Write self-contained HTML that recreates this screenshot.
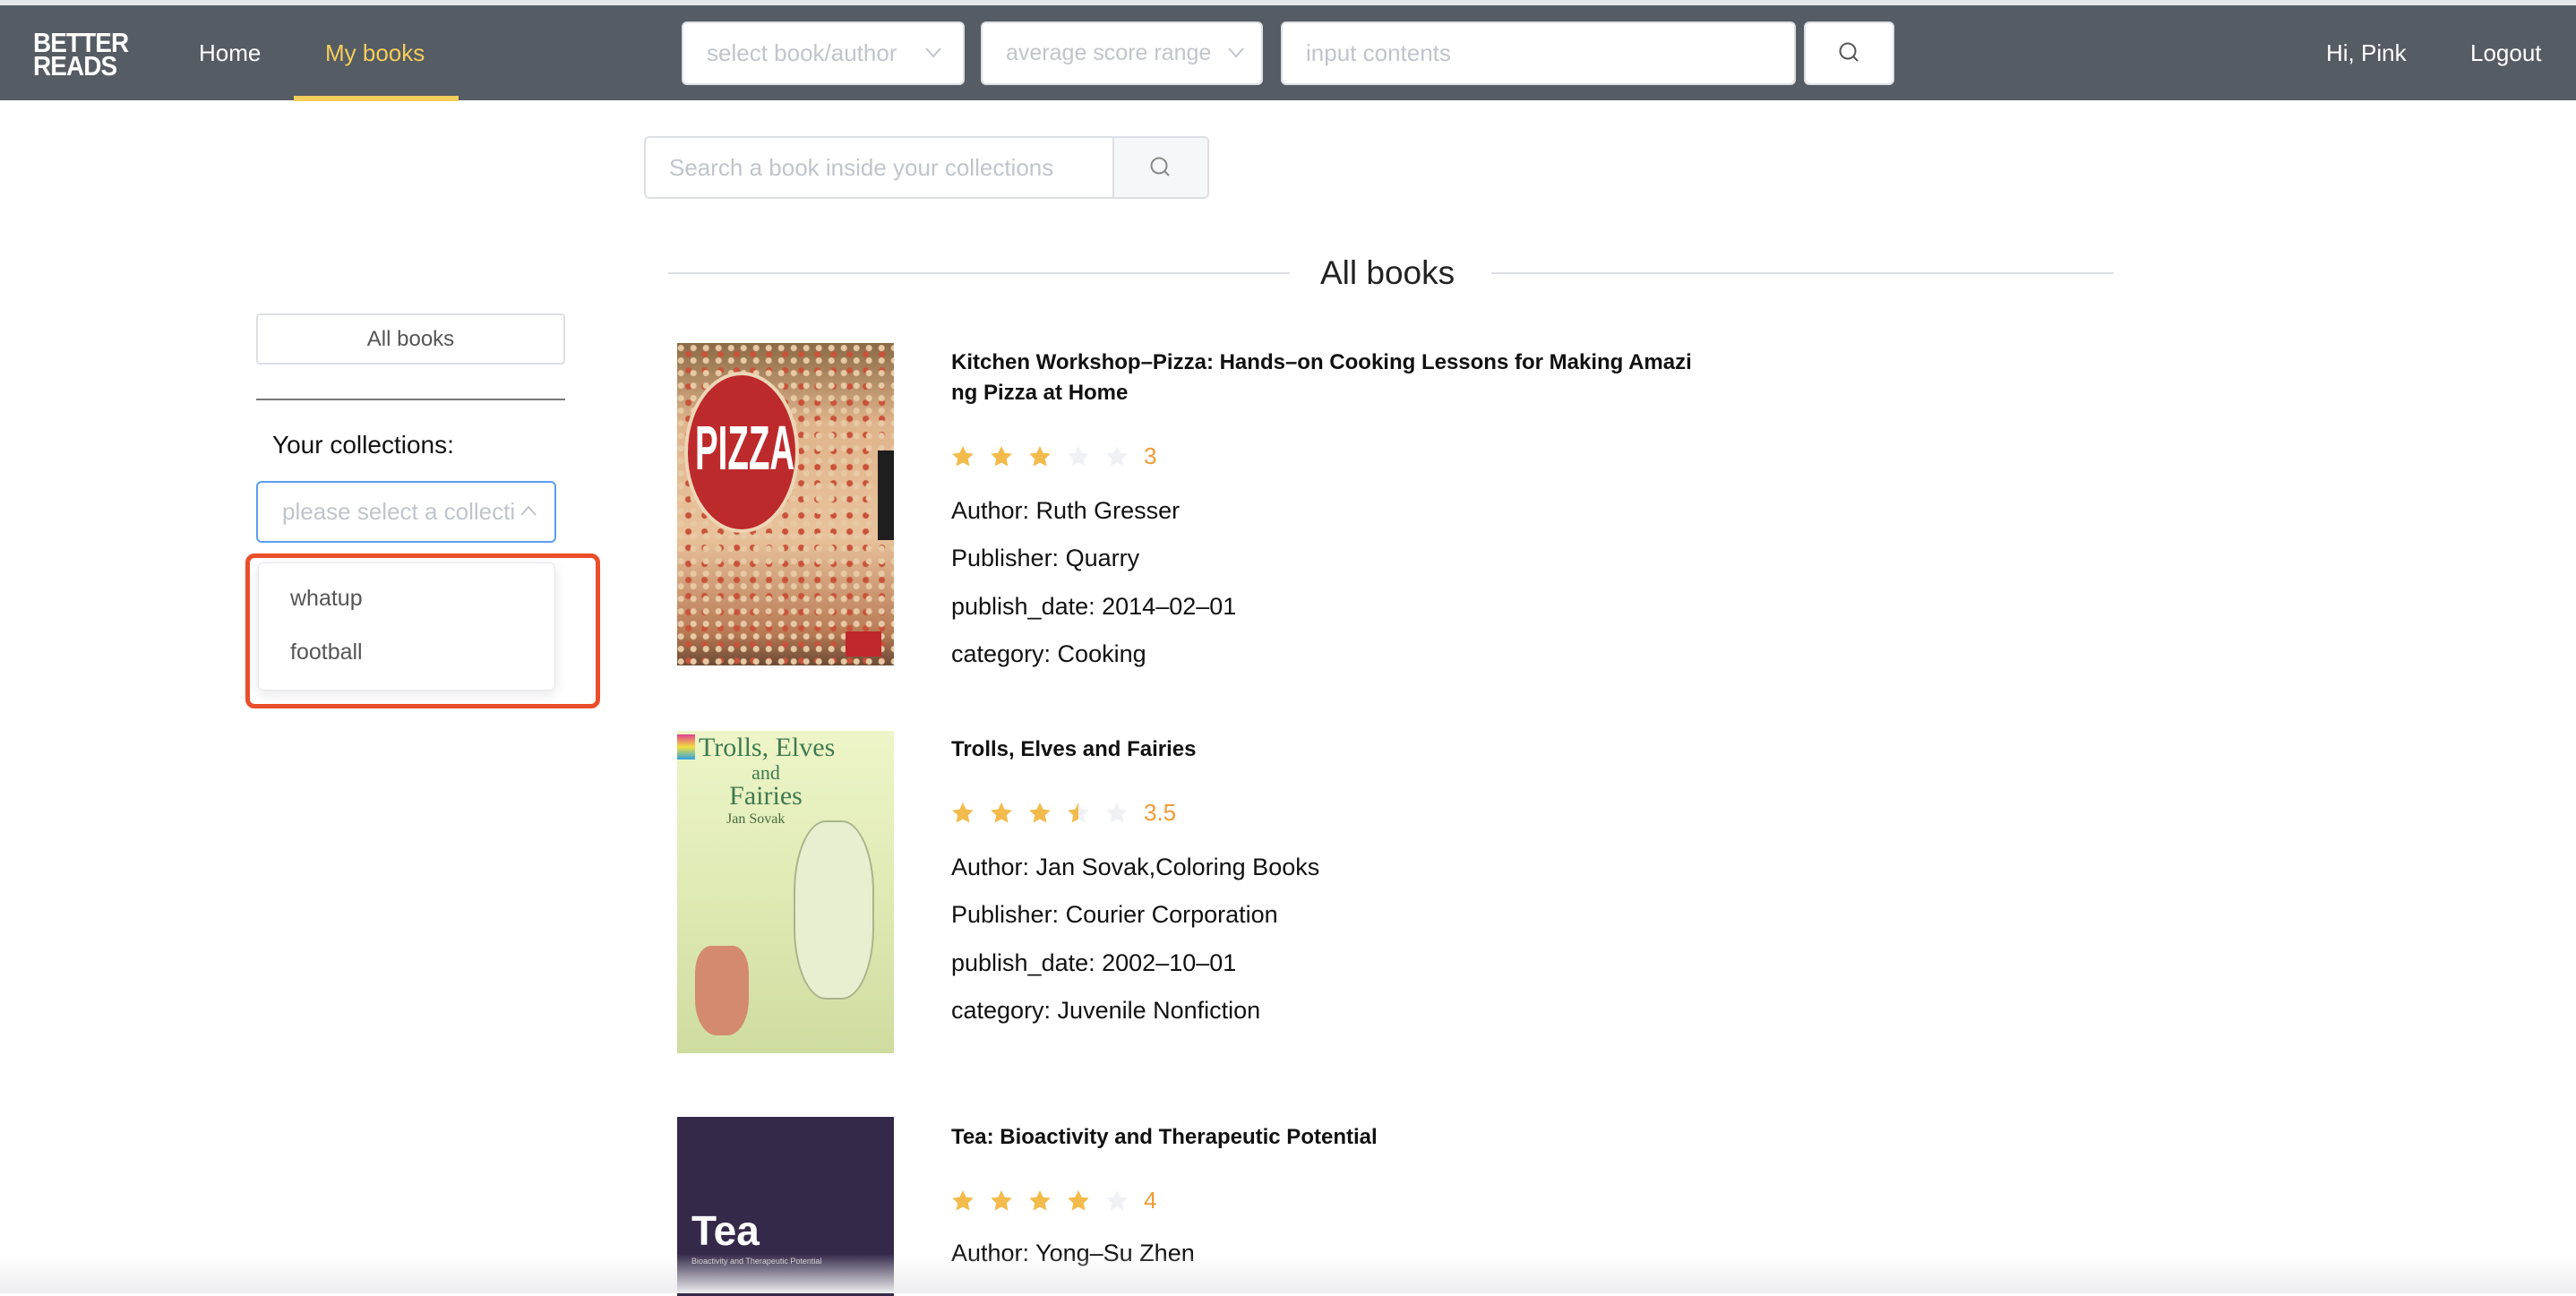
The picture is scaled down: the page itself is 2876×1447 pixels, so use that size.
<!DOCTYPE html>
<html><head><meta charset="utf-8"><style>
*{margin:0;padding:0;box-sizing:border-box}
body{width:2876px;height:1444px;position:relative;overflow:hidden;background:#fff;font-family:"Liberation Sans",sans-serif}
.a{position:absolute;white-space:nowrap}
.hdr{left:0;top:6px;width:2876px;height:106px;background:#565c64}
.box{background:#fff;border:2px solid #dcdfe6;border-radius:6px}
.ph{color:#c0c4cc;font-size:26px;line-height:30px}
.t{font-size:24px;font-weight:bold;color:#111;line-height:33px}
.i{font-size:27px;color:#111;line-height:32px}
</style></head><body>
<div class="a" style="left:0;top:0;width:2876px;height:6px;background:#e4e5e8"></div>
<div class="a hdr"></div>
<div class="a" style="left:37px;top:35px;color:#fff;font-weight:bold;font-size:31px;line-height:26px;letter-spacing:-1px;transform:scaleX(0.9);transform-origin:left">BETTER<br>READS</div>
<div class="a" style="left:222px;top:44px;color:#fff;font-size:26px;line-height:30px">Home</div>
<div class="a" style="left:363px;top:44px;color:#f5cd5a;font-size:26px;line-height:30px">My books</div>
<div class="a" style="left:328px;top:107px;width:184px;height:6px;background:#f5cd5a"></div>
<div class="a box" style="left:761px;top:24px;width:316px;height:71px"></div>
<div class="a ph" style="left:789px;top:44px">select book/author</div>
<svg class="a" style="left:1032px;top:52px" width="20" height="14"><path d="M2 2l8 9 8-9" fill="none" stroke="#c0c4cc" stroke-width="2"/></svg>
<div class="a box" style="left:1095px;top:24px;width:315px;height:71px"></div>
<div class="a ph" style="left:1123px;top:44px;font-size:25px">average score range</div>
<svg class="a" style="left:1370px;top:52px" width="20" height="14"><path d="M2 2l8 9 8-9" fill="none" stroke="#c0c4cc" stroke-width="2"/></svg>
<div class="a box" style="left:1430px;top:24px;width:575px;height:71px"></div>
<div class="a ph" style="left:1458px;top:44px">input contents</div>
<div class="a box" style="left:2014px;top:24px;width:101px;height:71px"></div>
<svg class="a" style="left:2052px;top:46px" width="26" height="26"><circle cx="11" cy="11" r="8.5" fill="none" stroke="#555" stroke-width="2"/><path d="M17 17l5 5" stroke="#555" stroke-width="2"/></svg>
<div class="a" style="left:2597px;top:44px;color:#fff;font-size:26px;line-height:30px">Hi, Pink</div>
<div class="a" style="left:2758px;top:44px;color:#fff;font-size:26px;line-height:30px">Logout</div>

<div class="a" style="left:719px;top:152px;width:631px;height:70px;border:2px solid #dcdfe6;border-radius:6px;overflow:hidden"><div style="position:absolute;right:0;top:0;width:106px;height:100%;background:#f5f7fa;border-left:2px solid #dcdfe6"></div></div>
<div class="a ph" style="left:747px;top:172px">Search a book inside your collections</div>
<svg class="a" style="left:1283px;top:174px" width="26" height="26"><circle cx="11" cy="11" r="8.5" fill="none" stroke="#888" stroke-width="2"/><path d="M17 17l5 5" stroke="#888" stroke-width="2"/></svg>

<div class="a" style="left:746px;top:304px;width:694px;height:2px;background:#dcdfe6"></div>
<div class="a" style="left:1665px;top:304px;width:695px;height:2px;background:#dcdfe6"></div>
<div class="a" style="left:1474px;top:284px;font-size:37px;color:#222;line-height:42px">All books</div>

<div class="a box" style="left:286px;top:350px;width:345px;height:57px;border-radius:4px"></div>
<div class="a" style="left:286px;top:364px;width:345px;text-align:center;font-size:24px;color:#555;line-height:30px">All books</div>
<div class="a" style="left:286px;top:445px;width:345px;height:2px;background:#777"></div>
<div class="a" style="left:304px;top:481px;font-size:28px;color:#111;line-height:32px">Your collections:</div>
<div class="a" style="left:286px;top:537px;width:335px;height:69px;border:2px solid #5a9ff0;border-radius:6px"></div>
<div class="a ph" style="left:315px;top:556px;font-size:26px">please select a collecti</div>
<svg class="a" style="left:580px;top:563px" width="20" height="14"><path d="M2 12l8-9 8 9" fill="none" stroke="#c0c4cc" stroke-width="2"/></svg>
<div class="a" style="left:288px;top:628px;width:332px;height:143px;background:#fff;border:1px solid #e4e7ed;border-radius:6px;box-shadow:0 4px 14px rgba(0,0,0,.1)"></div>
<div class="a" style="left:324px;top:653px;font-size:25px;color:#555;line-height:30px">whatup</div>
<div class="a" style="left:324px;top:713px;font-size:25px;color:#555;line-height:30px">football</div>
<div class="a" style="left:274px;top:618px;width:396px;height:173px;border:5px solid #ea4e2b;border-radius:10px"></div>

<!-- book 1 -->
<div class="a" style="left:756px;top:383px;width:242px;height:360px;background:radial-gradient(circle at 30% 40%,#e7c9a3 0 3px,transparent 4px) 0 0/14px 14px,radial-gradient(circle at 70% 70%,#c9523a 0 3px,transparent 4px) 0 0/18px 18px,linear-gradient(180deg,#8a6a45,#e0b48c 25%,#e8c29c 60%,#b87a55 90%,#6a4a35);overflow:hidden">
<div style="position:absolute;left:8px;top:32px;width:128px;height:180px;border-radius:50%;background:#bd2a2c;border:4px solid #ecd6b5"></div>
<div style="position:absolute;left:20px;top:82px;color:#fff;font-size:70px;font-weight:bold;line-height:70px;transform:scaleX(0.55);transform-origin:left">PIZZA</div>
<div style="position:absolute;left:224px;top:120px;width:18px;height:100px;background:#1e1e1e"></div>
<div style="position:absolute;left:188px;top:322px;width:40px;height:28px;background:#c0272d"></div>
</div>
<div class="a t" style="left:1062px;top:388px">Kitchen Workshop–Pizza: Hands–on Cooking Lessons for Making Amazi</div>
<div class="a t" style="left:1062px;top:422px">ng Pizza at Home</div>
<div class="a" style="left:1062px;top:497px" id="s1"></div>
<div class="a i" style="left:1062px;top:554px">Author: Ruth Gresser</div>
<div class="a i" style="left:1062px;top:607px">Publisher: Quarry</div>
<div class="a i" style="left:1062px;top:661px">publish_date: 2014–02–01</div>
<div class="a i" style="left:1062px;top:714px">category: Cooking</div>

<!-- book 2 -->
<div class="a" style="left:756px;top:816px;width:242px;height:360px;background:linear-gradient(180deg,#eef5c8,#dfeab4 50%,#cfdca0);overflow:hidden">
<div style="position:absolute;left:0;top:4px;width:20px;height:28px;background:linear-gradient(#e04090,#f0e040,#30a0e0)"></div>
<div style="position:absolute;left:24px;top:6px;width:150px;color:#3f7a50;font-family:'Liberation Serif',serif;font-size:30px;line-height:26px;text-align:center">Trolls, Elves<br><span style="font-size:22px">and</span><br>Fairies</div>
<div style="position:absolute;left:55px;top:90px;color:#4a6a40;font-family:'Liberation Serif',serif;font-size:16px">Jan Sovak</div>
<div style="position:absolute;left:130px;top:100px;width:90px;height:200px;border-radius:40%;background:#e8eed0;border:2px solid #a9b48a"></div>
<div style="position:absolute;left:20px;top:240px;width:60px;height:100px;background:#d38a6e;border-radius:30% 30% 40% 40%"></div>
</div>
<div class="a t" style="left:1062px;top:820px">Trolls, Elves and Fairies</div>
<div class="a" style="left:1062px;top:895px" id="s2"></div>
<div class="a i" style="left:1062px;top:952px">Author: Jan Sovak,Coloring Books</div>
<div class="a i" style="left:1062px;top:1005px">Publisher: Courier Corporation</div>
<div class="a i" style="left:1062px;top:1059px">publish_date: 2002–10–01</div>
<div class="a i" style="left:1062px;top:1112px">category: Juvenile Nonfiction</div>

<!-- book 3 -->
<div class="a" style="left:756px;top:1247px;width:242px;height:200px;background:#35294a;overflow:hidden">
<div style="position:absolute;left:16px;top:100px;color:#fff;font-size:46px;font-weight:bold">Tea</div>
<div style="position:absolute;left:16px;top:156px;color:#ccc;font-size:9px">Bioactivity and Therapeutic Potential</div>
</div>
<div class="a t" style="left:1062px;top:1253px">Tea: Bioactivity and Therapeutic Potential</div>
<div class="a" style="left:1062px;top:1328px" id="s3"></div>
<div class="a i" style="left:1062px;top:1383px">Author: Yong–Su Zhen</div>

<div class="a" style="left:0;top:1400px;width:2876px;height:44px;background:linear-gradient(180deg,rgba(240,240,242,0),#eeeef0)"></div>

<svg width="0" height="0" style="position:absolute"><defs>
<path id="st" d="M13 1l3.6 7.6 8.2 1-6 5.7 1.6 8.2L13 19.5 5.6 23.5l1.6-8.2-6-5.7 8.2-1z"/>
<clipPath id="half"><rect x="0" y="0" width="13" height="26"/></clipPath>
</defs></svg>
<script>
function stars(id,n,label){var h='';for(var k=0;k<5;k++){var x=k*43;h+='<svg class="a" style="left:'+x+'px;top:0" width="26" height="26"><use href="#st" fill="#eff1f5"/>';if(k<Math.floor(n))h+='<use href="#st" fill="#f2bb4b"/>';else if(k<n)h+='<use href="#st" fill="#f2bb4b" clip-path="url(#half)"/>';h+='</svg>';}
h+='<div class="a" style="left:215px;top:-4px;color:#f09a35;font-size:26px;line-height:32px">'+label+'</div>';document.getElementById(id).innerHTML=h;}
stars('s1',3,'3');stars('s2',3.5,'3.5');stars('s3',4,'4');
</script>
</body></html>
